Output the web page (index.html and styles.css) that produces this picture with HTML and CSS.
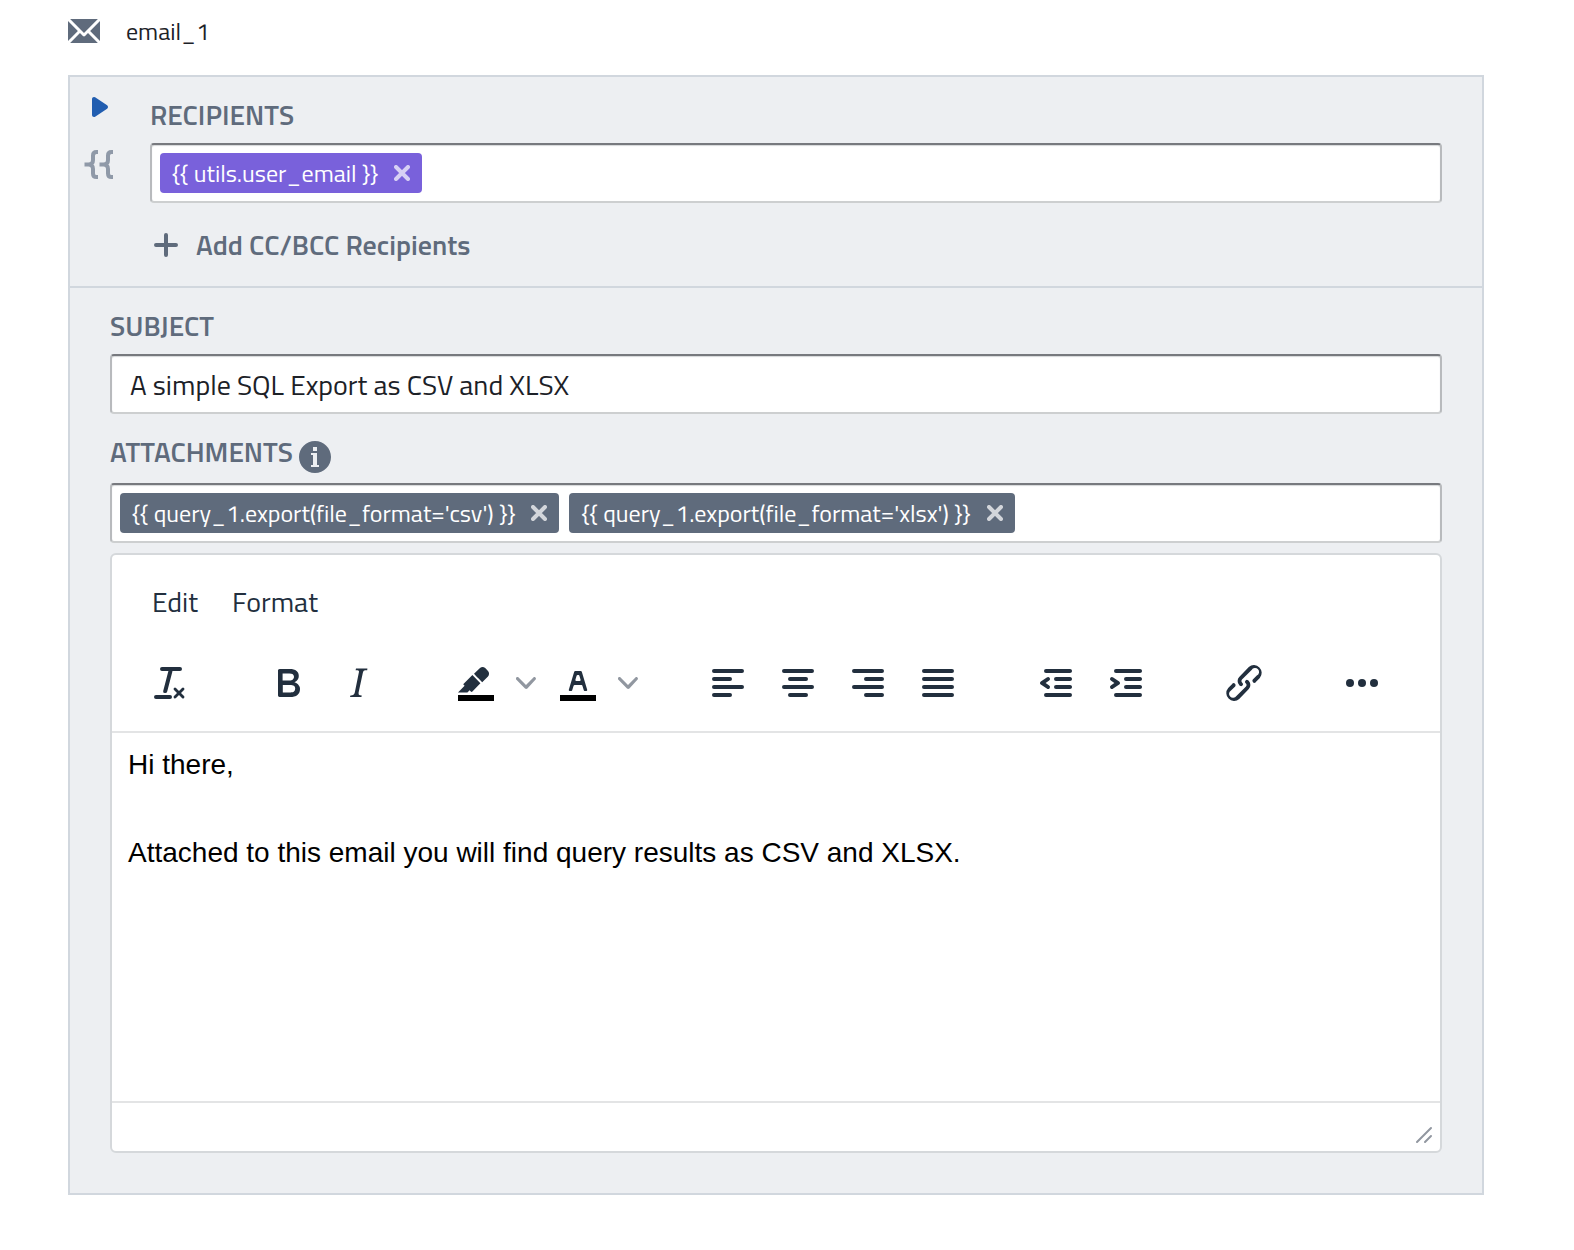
FILE: index.html
```html
<!DOCTYPE html>
<html lang="en">
<head>
<meta charset="utf-8">
<title>email_1</title>
<link rel="stylesheet" href="styles.css">
</head>
<body>
<main class="page">
  <header class="block-title">
    <svg class="icon" width="32" height="32" viewBox="0 0 16 16" aria-hidden="true"><path d="M0 3.06v9.88L4.94 8 0 3.06zM14.94 2H1.06L8 8.94 14.94 2zM8.53 10.53c-.14.13-.32.22-.53.22s-.39-.09-.53-.22L5.99 9.06 1.06 14h13.88L10 9.06l-1.470 1.470zM11.06 8L16 12.94V3.06L11.06 8z"/></svg>
    <span>email_1</span>
  </header>

  <form class="card">
    <section class="recipients">
      <div class="gutter">
        <button type="button" class="plain play" aria-label="Run"><svg width="32" height="32" viewBox="0 0 16 16"><path d="M12 8c0-.35-.19-.64-.46-.82l.01-.02-6-4-.01.02A.969.969 0 0 0 5 3c-.55 0-1 .45-1 1v8c0 .55.45 1 1 1 .21 0 .39-.08.54-.18l.01.02 6-4-.01-.02c.27-.18.46-.47.46-.82z"/></svg></button>
        <svg class="braces" width="32" height="32" viewBox="0 0 32 32" aria-hidden="true"><path d="M14 4h-1.500q-3.500 0-3.500 3.500v4.500q0 4.500-4.500 4.500H0.500M4.500 16.500q4.500 0 4.500 4.500v4.500q0 3.500 3.500 3.500h1.500M29 4h-1.500q-3.500 0-3.500 3.500v4.500q0 4.500-4.500 4.500H15.500M19.500 16.500q4.500 0 4.500 4.500v4.500q0 3.500 3.500 3.500h1.500"/></svg>
      </div>
      <div class="fields">
        <label class="label" for="to">RECIPIENTS</label>
        <div class="tags">
          <span class="tag tag-user">{{ utils.user_email }}<button type="button" class="plain" aria-label="Remove"><svg width="16" height="16" viewBox="0 0 16 16"><path d="M2 2l12 12M14 2L2 14"/></svg></button></span>
          <input id="to" class="tag-input" type="text">
        </div>
        <button type="button" class="plain add"><svg width="24" height="24" viewBox="0 0 24 24"><path d="M12 2v20M2 12h20"/></svg>Add CC/BCC Recipients</button>
      </div>
    </section>

    <section class="message">
      <label class="label" for="subject">SUBJECT</label>
      <input id="subject" class="subject" type="text" value="A simple SQL Export as CSV and XLSX">

      <label class="label label-info" for="files">ATTACHMENTS
        <svg class="icon" width="32" height="32" viewBox="0 0 16 16" aria-hidden="true"><path d="M8 0C3.580 0 0 3.580 0 8s3.580 8 8 8 8-3.580 8-8-3.580-8-8-8zM7 3h2v2H7V3zm3 10H6v-1h1V7H6V6h3v6h1v1z"/></svg>
      </label>
      <div class="tags">
        <span class="tag">{{ query_1.export(file_format='csv') }}<button type="button" class="plain" aria-label="Remove"><svg width="16" height="16" viewBox="0 0 16 16"><path d="M2 2l12 12M14 2L2 14"/></svg></button></span>
        <span class="tag">{{ query_1.export(file_format='xlsx') }}<button type="button" class="plain" aria-label="Remove"><svg width="16" height="16" viewBox="0 0 16 16"><path d="M2 2l12 12M14 2L2 14"/></svg></button></span>
        <input id="files" class="tag-input" type="text">
      </div>

      <div class="editor">
        <div class="menubar">
          <button type="button" class="plain">Edit</button>
          <button type="button" class="plain">Format</button>
        </div>
        <div class="toolbar">
          <div class="group">
            <button type="button" class="plain tool" aria-label="Clear formatting"><svg width="48" height="48" viewBox="0 0 24 24"><path d="M13.200 6a1 1 0 0 1 0 .2l-2.600 10a1 1 0 0 1-1 .8h-.2a.8.8 0 0 1-.8-1l2.600-10H8a1 1 0 1 1 0-2h9a1 1 0 0 1 0 2h-3.800zM5 18h7a1 1 0 0 1 0 2H5a1 1 0 0 1 0-2zm13 1.500L16.500 18 15 19.500a.7.7 0 0 1-1-1l1.500-1.500-1.500-1.500a.7.7 0 0 1 1-1l1.500 1.500 1.500-1.500a.7.7 0 0 1 1 1L17.500 17l1.500 1.500a.7.7 0 0 1-1 1z"/></svg></button>
          </div>
          <div class="group">
            <button type="button" class="plain tool" aria-label="Bold"><svg width="48" height="48" viewBox="0 0 24 24"><path d="M7.800 19c-.3 0-.5 0-.6-.2l-.2-.5V5.700c0-.2 0-.4.2-.5l.6-.2h5c1.500 0 2.700.3 3.500 1 .7.6 1.100 1.400 1.100 2.500a3 3 0 0 1-.6 1.900c-.4.6-1 1-1.600 1.200.4.1.9.3 1.300.6s.8.7 1 1.200c.4.4.5 1 .5 1.600 0 1.300-.4 2.300-1.300 3-.8.7-2.100 1-3.800 1H7.800zm5-8.300c.6 0 1.200-.1 1.600-.5.4-.3.6-.7.6-1.300 0-1.100-.8-1.700-2.300-1.700H9.300v3.500h3.400zm.5 6c.7 0 1.300-.1 1.700-.4.4-.4.6-.9.6-1.500s-.2-1-.7-1.400c-.4-.3-1-.4-2-.4H9.400v3.800h4z" fill-rule="evenodd"/></svg></button>
            <button type="button" class="plain tool" aria-label="Italic"><svg width="48" height="48" viewBox="0 0 24 24"><path d="M16.700 4.700l-.1.9h-.3c-.6 0-1 0-1.400.3-.3.3-.4.6-.5 1.100l-2.100 9.800v.6c0 .5.4.8 1.400.8h.2l-.2.8H8l.2-.8h.2c1.100 0 1.800-.5 2-1.500l2-9.800.1-.5c0-.6-.4-.8-1.400-.8h-.3l.2-.9h5.800z"/></svg></button>
          </div>
          <div class="group">
            <button type="button" class="plain tool" aria-label="Background color"><svg width="48" height="48" viewBox="0 0 24 24"><path class="swatch" d="M3 18h18v3H3z"/><path d="M7.700 16.700H3l3.300-3.300-.7-.8L10.200 8l4 4.100-4 4.200c-.2.2-.6.2-.8 0l-.6-.7-1.100 1.100zm5-7.500L11 7.400l3-2.900a2 2 0 0 1 2.600 0L18 6c.7.7.7 2 0 2.700l-2.900 2.900-1.800-1.800-.5-.6"/></svg></button>
            <button type="button" class="plain chevron" aria-label="Choose background color"><svg width="20" height="20" viewBox="0 0 10 10"><path d="M8.700 2.200c.3-.3.8-.3 1 0 .4.4.4.9 0 1.200L5.700 7.800c-.3.3-.9.3-1.200 0L.2 3.400a.8.8 0 0 1 0-1.200c.3-.3.8-.3 1.100 0L5 6l3.700-3.800z"/></svg></button>
            <button type="button" class="plain tool" aria-label="Text color"><svg width="48" height="48" viewBox="0 0 24 24"><path class="swatch" d="M3 18h18v3H3z"/><path d="M8.700 16h-.8a.5.5 0 0 1-.5-.6l2.700-9c.1-.3.3-.4.5-.4h2.800c.2 0 .4.1.5.4l2.700 9a.5.5 0 0 1-.5.6h-.8a.5.5 0 0 1-.4-.4l-.7-2.200c0-.3-.3-.4-.5-.4h-3.400c-.2 0-.4.1-.5.4l-.7 2.200c0 .3-.2.4-.4.4zm2.600-7.600l-.6 2a.5.5 0 0 0 .5.6h1.600a.5.5 0 0 0 .5-.6l-.6-2c0-.3-.3-.4-.5-.4h-.4c-.2 0-.4.1-.5.4z" fill-rule="evenodd"/></svg></button>
            <button type="button" class="plain chevron" aria-label="Choose text color"><svg width="20" height="20" viewBox="0 0 10 10"><path d="M8.700 2.200c.3-.3.8-.3 1 0 .4.4.4.9 0 1.200L5.700 7.800c-.3.3-.9.3-1.200 0L.2 3.400a.8.8 0 0 1 0-1.200c.3-.3.8-.3 1.100 0L5 6l3.700-3.800z"/></svg></button>
          </div>
          <div class="group">
            <button type="button" class="plain tool" aria-label="Align left"><svg class="lines" width="48" height="48" viewBox="0 0 24 24"><path d="M5 6h14M5 10h8M5 14h14M5 18h8"/></svg></button>
            <button type="button" class="plain tool" aria-label="Align center"><svg class="lines" width="48" height="48" viewBox="0 0 24 24"><path d="M5 6h14M8 10h8M5 14h14M8 18h8"/></svg></button>
            <button type="button" class="plain tool" aria-label="Align right"><svg class="lines" width="48" height="48" viewBox="0 0 24 24"><path d="M5 6h14M11 10h8M5 14h14M11 18h8"/></svg></button>
            <button type="button" class="plain tool" aria-label="Justify"><svg class="lines" width="48" height="48" viewBox="0 0 24 24"><path d="M5 6h14M5 10h14M5 14h14M5 18h14"/></svg></button>
          </div>
          <div class="group">
            <button type="button" class="plain tool" aria-label="Decrease indent"><svg width="48" height="48" viewBox="0 0 24 24"><path d="M7 5h12c.6 0 1 .4 1 1s-.4 1-1 1H7a1 1 0 1 1 0-2zm5 4h7c.6 0 1 .4 1 1s-.4 1-1 1h-7a1 1 0 0 1 0-2zm0 4h7c.6 0 1 .4 1 1s-.4 1-1 1h-7a1 1 0 0 1 0-2zm-5 4h12a1 1 0 0 1 0 2H7a1 1 0 0 1 0-2zm1.600-3.800a1 1 0 0 1-1.200 1.600l-3-2a1 1 0 0 1 0-1.600l3-2a1 1 0 0 1 1.200 1.600L6.800 12l1.800 1.200z"/></svg></button>
            <button type="button" class="plain tool" aria-label="Increase indent"><svg width="48" height="48" viewBox="0 0 24 24"><path d="M7 5h12c.6 0 1 .4 1 1s-.4 1-1 1H7a1 1 0 1 1 0-2zm5 4h7c.6 0 1 .4 1 1s-.4 1-1 1h-7a1 1 0 0 1 0-2zm0 4h7c.6 0 1 .4 1 1s-.4 1-1 1h-7a1 1 0 0 1 0-2zm-5 4h12a1 1 0 0 1 0 2H7a1 1 0 0 1 0-2zm-2.600-3.800L6.200 12l-1.800-1.200a1 1 0 0 1 1.200-1.600l3 2a1 1 0 0 1 0 1.600l-3 2a1 1 0 1 1-1.200-1.600z"/></svg></button>
          </div>
          <div class="group">
            <button type="button" class="plain tool" aria-label="Insert link"><svg width="48" height="48" viewBox="0 0 24 24"><path d="M6.200 12.300a1 1 0 0 1 1.400 1.400l-2.100 2a2 2 0 1 0 2.700 2.800l4.800-4.800a1 1 0 0 0 0-1.400 1 1 0 1 1 1.400-1.300 2.900 2.900 0 0 1 0 4L9.600 20a3.900 3.900 0 0 1-5.500-5.500l2-2zm11.600-.6a1 1 0 0 1-1.400-1.400l2-2a2 2 0 1 0-2.600-2.800L11 10.300a1 1 0 0 0 0 1.400A1 1 0 1 1 9.600 13a2.900 2.900 0 0 1 0-4L14.400 4a3.900 3.900 0 0 1 5.500 5.500l-2 2z"/></svg></button>
          </div>
          <div class="group">
            <button type="button" class="plain tool" aria-label="More"><svg width="48" height="48" viewBox="0 0 24 24"><circle cx="6" cy="12" r="2"/><circle cx="12" cy="12" r="2"/><circle cx="18" cy="12" r="2"/></svg></button>
          </div>
        </div>
        <textarea class="body-text" aria-label="Message">Hi there,

Attached to this email you will find query results as CSV and XLSX.</textarea>
        <div class="statusbar">
          <svg width="20" height="20" viewBox="0 0 10 10" aria-hidden="true"><path d="M8.500 1.500l-7 7M8.500 5.500l-3 3"/></svg>
        </div>
      </div>
    </section>
  </form>
</main>
</body>
</html>
```
FILE: styles.css
```css
* {
  box-sizing: border-box;
}

body {
  margin: 0;
  background: #fff;
  color: #1c2127;
  font-family: "Titillium Web", Roboto, sans-serif;
  font-size: 28px;
  line-height: 36px;
}

svg {
  display: block;
  flex: none;
}

.plain {
  display: flex;
  align-items: center;
  margin: 0;
  padding: 0;
  border: 0;
  background: none;
  color: inherit;
  font: inherit;
  cursor: pointer;
}

.icon {
  fill: #5f6b7c;
}

.page {
  padding: 12px 90px 55px 68px;
}

.block-title {
  display: flex;
  align-items: center;
  gap: 26px;
  height: 38px;
  margin-bottom: 25px;
  font-size: 24px;
}

.card {
  border: 2px solid #d1d7de;
  background: #edeff2;
}

.recipients {
  display: flex;
  padding: 20px 40px 11px 12px;
  border-bottom: 2px solid #d1d7de;
}

.gutter {
  display: flex;
  flex-direction: column;
  align-items: center;
  gap: 25px;
  width: 36px;
  margin-right: 32px;
}

.play {
  margin-top: -6px;
  fill: #215db0;
}

.braces {
  fill: none;
  stroke: #8f99a8;
  stroke-width: 4;
}

.fields {
  flex: 1;
  min-width: 0;
}

.label {
  display: flex;
  align-items: center;
  height: 36px;
  margin-bottom: 10px;
  color: #5f6b7c;
  font-weight: 600;
}

.label-info {
  gap: 6px;
  margin-top: 20px;
  margin-bottom: 13px;
}

.label-info .icon {
  margin-top: 10px;
}

.tags,
.subject {
  width: 100%;
  height: 60px;
  border: 2px solid #cdcfd0;
  border-top-color: #77797e;
  border-left-color: #b8babd;
  border-right-color: #b8babd;
  border-radius: 4px;
  background: #fff;
  box-shadow: inset 0 1px 1px #d5d7d9;
}

.tags {
  display: flex;
  align-items: center;
  gap: 10px;
  padding: 0 8px;
}

.subject {
  display: block;
  padding: 0 18px;
  color: #1c2127;
  font: inherit;
}

.tag {
  display: flex;
  align-items: center;
  gap: 16px;
  height: 40px;
  padding: 0 12px;
  border-radius: 4px;
  background: #5f6b7c;
  color: #fff;
  font-size: 24px;
  white-space: nowrap;
}

.tag svg {
  fill: none;
  stroke: #d3d6db;
  stroke-width: 4;
  stroke-linecap: round;
}

.tag-user {
  background: #7961db;
}

.tag-user svg {
  stroke: #d7d0f4;
}

.tag-input {
  flex: 1;
  min-width: 0;
  border: 0;
  outline: 0;
  background: none;
  font: inherit;
}

.add {
  gap: 18px;
  height: 60px;
  margin-top: 12px;
  padding-left: 4px;
  color: #5f6b7c;
  font-weight: 600;
}

.add svg {
  fill: none;
  stroke: #5f6b7c;
  stroke-width: 4;
  stroke-linecap: round;
}

.message {
  padding: 20px 40px 40px;
}

.editor {
  margin-top: 10px;
  border: 2px solid #d5d8db;
  border-radius: 6px;
  background: #fff;
  color: #222f3e;
}

.menubar {
  display: flex;
  gap: 34px;
  padding: 29px 40px 0;
}

.toolbar {
  display: flex;
  gap: 48px;
  padding: 28px 23px 13px;
  border-bottom: 2px solid #e3e4e5;
}

.group {
  display: flex;
}

.tool {
  justify-content: center;
  width: 70px;
  height: 70px;
  fill: #222f3e;
}

.lines {
  fill: none;
  stroke: #222f3e;
  stroke-width: 2;
  stroke-linecap: round;
}

.swatch {
  fill: #000;
}

.chevron {
  width: 32px;
  padding-left: 5px;
  fill: #9197a0;
}

.body-text {
  display: block;
  width: 100%;
  height: 368px;
  padding: 10px 16px;
  border: 0;
  outline: 0;
  background: none;
  color: #000;
  font: 28px/44px "Liberation Sans", Arial, sans-serif;
  resize: none;
}

.statusbar {
  display: flex;
  align-items: flex-end;
  justify-content: flex-end;
  height: 50px;
  padding: 6px;
  border-top: 2px solid #e3e4e5;
}

.statusbar svg {
  stroke: #9197a0;
  stroke-width: 1;
  stroke-linecap: round;
}
```
